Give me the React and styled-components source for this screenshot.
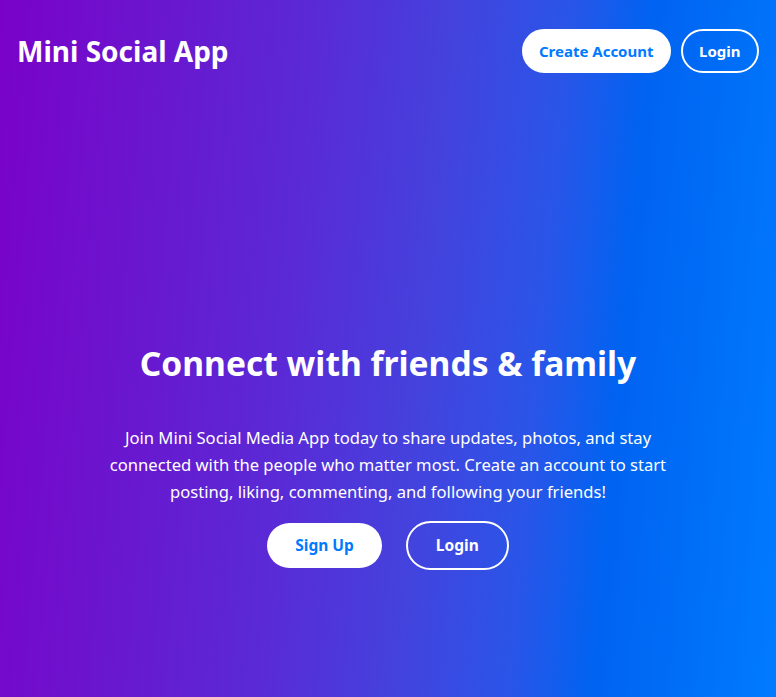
import React from 'react';
import styled, { createGlobalStyle } from 'styled-components';

const GlobalStyle = createGlobalStyle`
  * {
    box-sizing: border-box;
  }

  body {
    margin: 0;
    font-family: 'Noto Sans', 'Open Sans', sans-serif;
    color: #fff;
    background: linear-gradient(95deg, #7a02c8 0%, #5a2ad6 38%, #4343de 55%, #2a55e8 68%, #0063f1 78%, #007bff 100%);
    background-attachment: fixed;
  }
`;

const StyledPage = styled.div`
  min-height: 100vh;
`;

const StyledHeader = styled.header`
  display: flex;
  align-items: center;
  justify-content: space-between;
  height: 102px;
  padding: 0 17px;
`;

const StyledLogo = styled.h1`
  margin: 0;
  font-size: 28px;
  font-weight: 700;
`;

const StyledNav = styled.nav`
  display: flex;
  gap: 10px;
`;

const StyledNavButton = styled.button`
  height: 44px;
  padding: 0 ${({ outline }) => (outline ? '16.5px' : '15px')};
  border-radius: 999px;
  font-family: inherit;
  font-size: 15px;
  font-weight: 700;
  cursor: pointer;
  border: 2px solid #fff;
  background: ${({ outline }) => (outline ? 'transparent' : '#fff')};
  color: ${({ outline }) => (outline ? '#fff' : '#007bff')};
`;

const StyledHeroButton = styled.button`
  padding: 11px 28px;
  border-radius: 999px;
  font-family: inherit;
  font-size: 15.5px;
  line-height: 23px;
  font-weight: 700;
  cursor: pointer;
  border: ${({ outline }) => (outline ? '2px solid #fff' : 'none')};
  background: ${({ outline }) => (outline ? 'transparent' : '#fff')};
  color: ${({ outline }) => (outline ? '#fff' : '#007bff')};
`;

const StyledHero = styled.section`
  min-height: 100vh;
  display: flex;
  flex-direction: column;
  align-items: center;
  justify-content: center;
  text-align: center;
  padding: 8px 20px 0;
`;

const StyledHeading = styled.h2`
  margin: 0 0 38px;
  font-size: 33.6px;
  font-weight: 700;
`;

const StyledParagraph = styled.p`
  max-width: 580px;
  margin: 0 0 16px;
  font-size: 16.6px;
  line-height: 27px;
`;

const StyledActions = styled.div`
  display: flex;
  align-items: center;
  gap: 24px;
`;

const App = () => (
  <StyledPage>
    <GlobalStyle />
    <StyledHeader>
      <StyledLogo>Mini Social App</StyledLogo>
      <StyledNav>
        <StyledNavButton>Create Account</StyledNavButton>
        <StyledNavButton outline>Login</StyledNavButton>
      </StyledNav>
    </StyledHeader>
    <StyledHero>
      <StyledHeading>Connect with friends &amp; family</StyledHeading>
      <StyledParagraph>
        Join Mini Social Media App today to share updates, photos, and stay connected with the
        people who matter most. Create an account to start posting, liking, commenting, and
        following your friends!
      </StyledParagraph>
      <StyledActions>
        <StyledHeroButton>Sign Up</StyledHeroButton>
        <StyledHeroButton outline>Login</StyledHeroButton>
      </StyledActions>
    </StyledHero>
  </StyledPage>
);

export default App;
